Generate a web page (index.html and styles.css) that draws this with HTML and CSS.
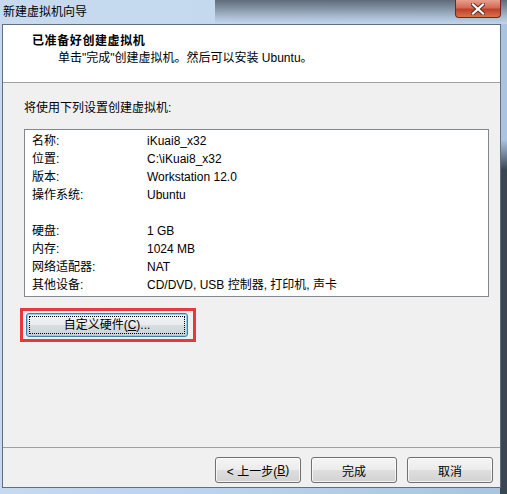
FILE: index.html
```html
<!DOCTYPE html>
<html lang="zh-CN">
<head>
<meta charset="utf-8">
<title>新建虚拟机向导</title>
<link rel="stylesheet" href="styles.css">
</head>
<body>
<div class="window">
  <div class="titlebar">
    <span class="title">新建虚拟机向导</span>
    <div class="close">
      <svg width="14" height="12" viewBox="0 0 14 12">
        <path d="M2 1.5 L12 10.5 M12 1.5 L2 10.5" stroke="#5a2a22" stroke-width="4" stroke-linecap="square"/>
        <path d="M2 1.5 L12 10.5 M12 1.5 L2 10.5" stroke="#ffffff" stroke-width="2.2" stroke-linecap="square"/>
      </svg>
    </div>
  </div>
  <div class="client">
    <div class="header">
      <div class="h-title">已准备好创建虚拟机</div>
      <div class="h-sub">单击"完成"创建虚拟机。然后可以安装 Ubuntu。</div>
    </div>
    <div class="body">
      <div class="intro">将使用下列设置创建虚拟机:</div>
      <div class="listbox">
        <div class="row"><span class="k">名称:</span><span class="v">iKuai8_x32</span></div>
        <div class="row"><span class="k">位置:</span><span class="v">C:\iKuai8_x32</span></div>
        <div class="row"><span class="k">版本:</span><span class="v">Workstation 12.0</span></div>
        <div class="row"><span class="k">操作系统:</span><span class="v">Ubuntu</span></div>
        <div class="row"></div>
        <div class="row"><span class="k">硬盘:</span><span class="v">1 GB</span></div>
        <div class="row"><span class="k">内存:</span><span class="v">1024 MB</span></div>
        <div class="row"><span class="k">网络适配器:</span><span class="v">NAT</span></div>
        <div class="row"><span class="k">其他设备:</span><span class="v">CD/DVD, USB 控制器, 打印机, 声卡</span></div>
      </div>
      <div class="highlight">
        <button class="btn btn-focus"><span class="focus-ring">自定义硬件(<u>C</u>)...</span></button>
      </div>
    </div>
    <div class="footer">
      <button class="btn btn-foot">&lt; 上一步(<u>B</u>)</button>
      <button class="btn btn-foot">完成</button>
      <button class="btn btn-foot">取消</button>
    </div>
  </div>
</div>
</body>
</html>
```
FILE: styles.css
```css
* { box-sizing: border-box; }
html, body { margin: 0; padding: 0; }
body {
  width: 507px;
  height: 494px;
  overflow: hidden;
  font-family: "Liberation Sans", "Noto Sans CJK SC", sans-serif;
  font-size: 12px;
  color: #000;
}
.window {
  width: 507px;
  height: 494px;
  background:
    linear-gradient(to bottom, rgba(30,38,48,0) 0px, rgba(30,38,48,0) 140px, rgba(40,48,58,0.85) 170px) right top / 7px 100% no-repeat,
    linear-gradient(to right, #c6d9ef 0%, #bcd3ec 40%, #a9c3e0 100%);
  display: flex;
  flex-direction: column;
}
.titlebar {
  height: 24px;
  display: flex;
  align-items: flex-start;
  background:
    linear-gradient(to bottom, rgba(60,70,82,0.75) 0%, rgba(120,135,150,0.35) 70%, rgba(190,210,230,0) 100%) 215px 0 / 292px 100% no-repeat,
    linear-gradient(to right, #c7daef 0%, #c0d6ee 100%);
}
.title {
  padding: 4px 0 0 3px;
  line-height: 16px;
  font-size: 12px;
  color: #000;
}
.close {
  margin-left: auto;
  margin-right: 6px;
  width: 46px;
  height: 18px;
  border: 1px solid #6b2a20;
  border-top: none;
  border-radius: 0 0 4px 4px;
  background: linear-gradient(to bottom, #e8a08e 0%, #d46a52 45%, #c0402a 55%, #d8744e 100%);
  display: flex;
  align-items: center;
  justify-content: center;
}
.client {
  margin: 0 6px 0 2px;
  height: 464px;
  border: 1px solid #5f6f80;
  background: #f0f0f0;
  display: flex;
  flex-direction: column;
}
.header {
  height: 58px;
  background: #fff;
  border-bottom: 1px solid #a0a0a0;
  padding: 8px 0 0 29px;
}
.h-title {
  font-weight: bold;
  line-height: 16px;
  letter-spacing: 0.6px;
}
.h-sub {
  margin-top: 1px;
  padding-left: 26px;
  line-height: 16px;
}
.body {
  height: 365px;
  padding: 17px 0 0 21px;
  border-bottom: 1px solid #a0a0a0;
}
.intro {
  line-height: 16px;
}
.listbox {
  margin-top: 13px;
  width: 465px;
  height: 168px;
  background: #fff;
  border: 1px solid #828790;
  padding: 2px 0 0 7px;
}
.row {
  height: 18px;
  line-height: 18px;
  display: flex;
}
.k { width: 115px; }
.highlight {
  margin-top: 11px;
  margin-left: -4px;
  width: 176px;
  height: 34px;
  border: 3px solid #e8383d;
  padding: 2px 5px 2px 3px;
}
.btn {
  font-family: "Liberation Sans", "Noto Sans CJK SC", sans-serif;
  font-size: 12px;
  color: #000;
  border: 1px solid #707070;
  border-radius: 3px;
  background: linear-gradient(to bottom, #f4f4f4 0%, #ececec 48%, #dedede 52%, #d2d2d2 100%);
  box-shadow: inset 0 0 0 1px rgba(255,255,255,0.7);
  padding: 0;
  display: flex;
  align-items: center;
  justify-content: center;
}
.btn u { text-decoration: underline; }
.btn-focus {
  width: 162px;
  height: 24px;
  border-color: #3c7fb1;
  background: linear-gradient(to bottom, #f2f4f6 0%, #e8ecef 48%, #d8dde2 52%, #cdd3d9 100%);
  box-shadow: inset 0 0 0 1px #8fd0f0;
  padding: 2px;
}
.focus-ring {
  width: 100%;
  height: 100%;
  border: 1px dotted #000;
  display: flex;
  align-items: center;
  justify-content: center;
  line-height: 16px;
}
.footer {
  flex: 1;
  display: flex;
  justify-content: flex-end;
  align-items: flex-start;
  gap: 10px;
  padding: 9px 7px 0 0;
}
.btn-foot {
  width: 86px;
  height: 26px;
}
```
